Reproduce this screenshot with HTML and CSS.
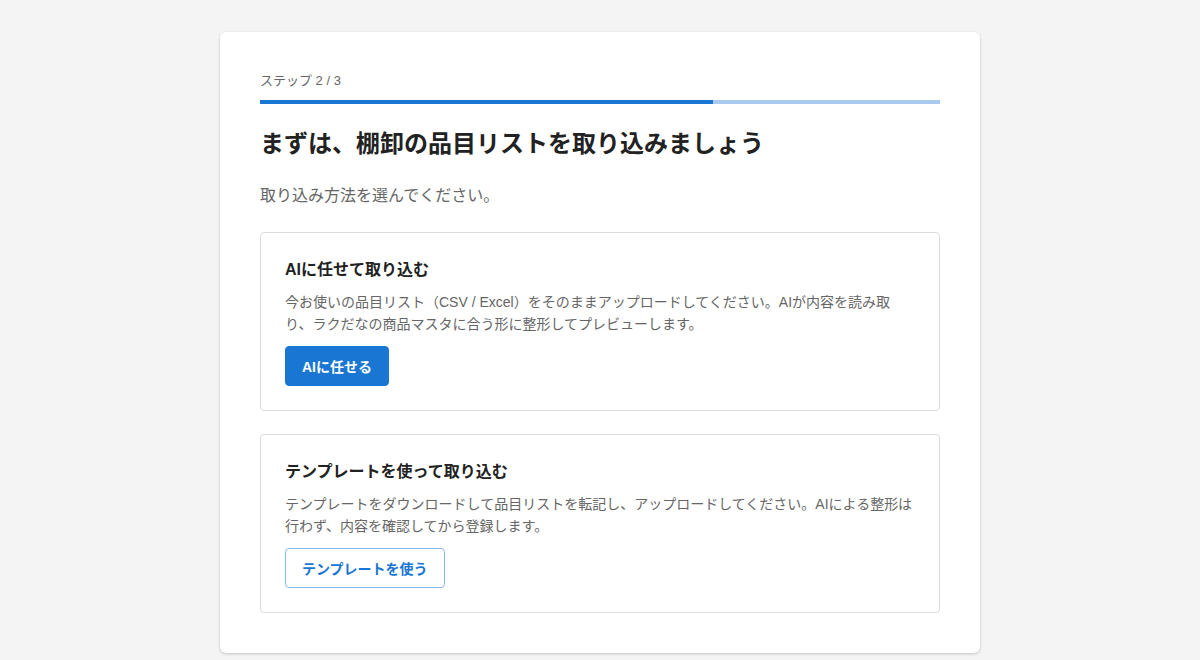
FILE: index.html
```html
<!DOCTYPE html>
<html lang="ja">
<head>
  <meta charset="UTF-8">
  <meta name="viewport" content="width=device-width, initial-scale=1">
  <title>品目リストの取り込み</title>
  <link rel="stylesheet" href="styles.css">
</head>
<body>
  <div class="container">
    <p class="step">ステップ 2 / 3</p>
    <div class="progress"><div class="progress-fill"></div></div>

    <h1>まずは、棚卸の品目リストを取り込みましょう</h1>
    <p class="lead">取り込み方法を選んでください。</p>

    <div class="option">
      <h3>AIに任せて取り込む</h3>
      <p>今お使いの品目リスト（CSV / Excel）をそのままアップロードしてください。AIが内容を読み取り、ラクだなの商品マスタに合う形に整形してプレビューします。</p>
      <button type="button" class="btn btn-primary">AIに任せる</button>
    </div>

    <div class="option">
      <h3>テンプレートを使って取り込む</h3>
      <p>テンプレートをダウンロードして品目リストを転記し、アップロードしてください。AIによる整形は行わず、内容を確認してから登録します。</p>
      <button type="button" class="btn btn-outline">テンプレートを使う</button>
    </div>
  </div>
</body>
</html>
```

FILE: styles.css
```css
body {
  font-family: "Liberation Sans", "Noto Sans CJK JP", sans-serif;
  background-color: #f4f4f4;
  margin: 0;
  padding: 32px 0;
  color: #222;
}

.container {
  background-color: #ffffff;
  width: 680px;
  margin: 0 auto;
  padding: 40px;
  border-radius: 6px;
  box-shadow: 0 1px 3px rgba(0, 0, 0, 0.2);
}

.step {
  margin: 0;
  font-size: 13px;
  line-height: 18px;
  color: #666;
}

.progress {
  margin-top: 10px;
  height: 4px;
  background-color: #a9c9ee;
}

.progress-fill {
  width: 66.67%;
  height: 100%;
  background-color: #1976d2;
}

h1 {
  margin: 24px 0 0;
  font-size: 24px;
  line-height: 32px;
  font-weight: 700;
  color: #222;
}

.lead {
  margin: 24px 0 0;
  font-size: 16px;
  line-height: 24px;
  color: #666;
}

.option {
  margin-top: 24px;
  border: 1px solid #dddddd;
  border-radius: 4px;
  padding: 24px;
}

.option + .option {
  margin-top: 23px;
}

.option h3 {
  margin: 0;
  font-size: 16px;
  line-height: 26px;
  font-weight: 700;
  color: #222;
}

.option p {
  margin: 8px 0 11px;
  font-size: 14px;
  line-height: 22px;
  color: #666;
}

.btn {
  height: 40px;
  padding: 0 16px;
  border-radius: 4px;
  font-family: inherit;
  font-size: 14px;
  font-weight: 700;
  cursor: pointer;
}

.btn-primary {
  background-color: #1976d2;
  border: 1px solid #1976d2;
  color: #fff;
}

.btn-outline {
  background-color: #fff;
  border: 1px solid #8ab8e8;
  color: #1976d2;
}
```
